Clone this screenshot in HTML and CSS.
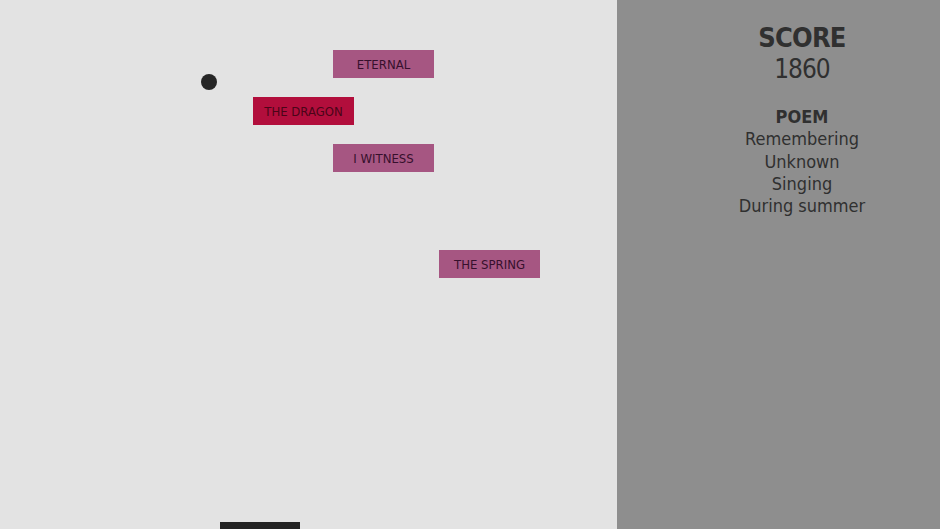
FILE: index.html
```html
<!DOCTYPE html>
<html>
<head>
<meta charset="utf-8">
<link rel="stylesheet" href="styles.css">
</head>
<body>
<div class="screen">
  <div class="field">
    <div class="ball"></div>
    <div class="brick brick-eternal">ETERNAL</div>
    <div class="brick brick-dragon hit">THE DRAGON</div>
    <div class="brick brick-witness">I WITNESS</div>
    <div class="brick brick-spring">THE SPRING</div>
    <div class="paddle"></div>
  </div>
  <div class="panel">
    <div class="score-label">SCORE</div>
    <div class="score-value">1860</div>
    <div class="poem">
      <div class="poem-title">POEM</div>
      <div class="poem-line">Remembering</div>
      <div class="poem-line">Unknown</div>
      <div class="poem-line">Singing</div>
      <div class="poem-line">During summer</div>
    </div>
  </div>
</div>
</body>
</html>
```
FILE: styles.css
```css
html, body {
  margin: 0;
  padding: 0;
  width: 940px;
  height: 529px;
  overflow: hidden;
}
.screen {
  display: flex;
  width: 940px;
  height: 529px;
  font-family: "DejaVu Sans Condensed", "DejaVu Sans", sans-serif;
}
.field {
  position: relative;
  width: 617px;
  height: 529px;
  background: #e3e3e3;
}
.ball {
  position: absolute;
  left: 201px;
  top: 74px;
  width: 16px;
  height: 16px;
  border-radius: 50%;
  background: #262626;
}
.brick {
  position: absolute;
  width: 101px;
  height: 28px;
  background: #a65682;
  color: #36102c;
  font-size: 13px;
  display: flex;
  align-items: center;
  justify-content: center;
}
.brick.hit {
  background: #b20e3c;
  color: #4a0518;
}
.brick-eternal { left: 333px; top: 50px; }
.brick-dragon { left: 253px; top: 97px; }
.brick-witness { left: 333px; top: 144px; }
.brick-spring { left: 439px; top: 250px; }
.paddle {
  position: absolute;
  left: 220px;
  top: 522px;
  width: 80px;
  height: 7px;
  background: #232323;
}
.panel {
  flex: 1;
  background: #8e8e8e;
  color: #303030;
  padding-left: 47px;
  padding-top: 22px;
  display: flex;
  flex-direction: column;
  align-items: center;
  text-align: center;
}
.score-label {
  font-size: 27px;
  font-weight: bold;
  line-height: 32px;
  letter-spacing: -0.8px;
}
.score-value {
  font-size: 26px;
  line-height: 30px;
  letter-spacing: -1px;
}
.poem {
  margin-top: 22px;
  font-size: 18px;
  line-height: 22.3px;
}
.poem-title {
  font-weight: bold;
}
```
